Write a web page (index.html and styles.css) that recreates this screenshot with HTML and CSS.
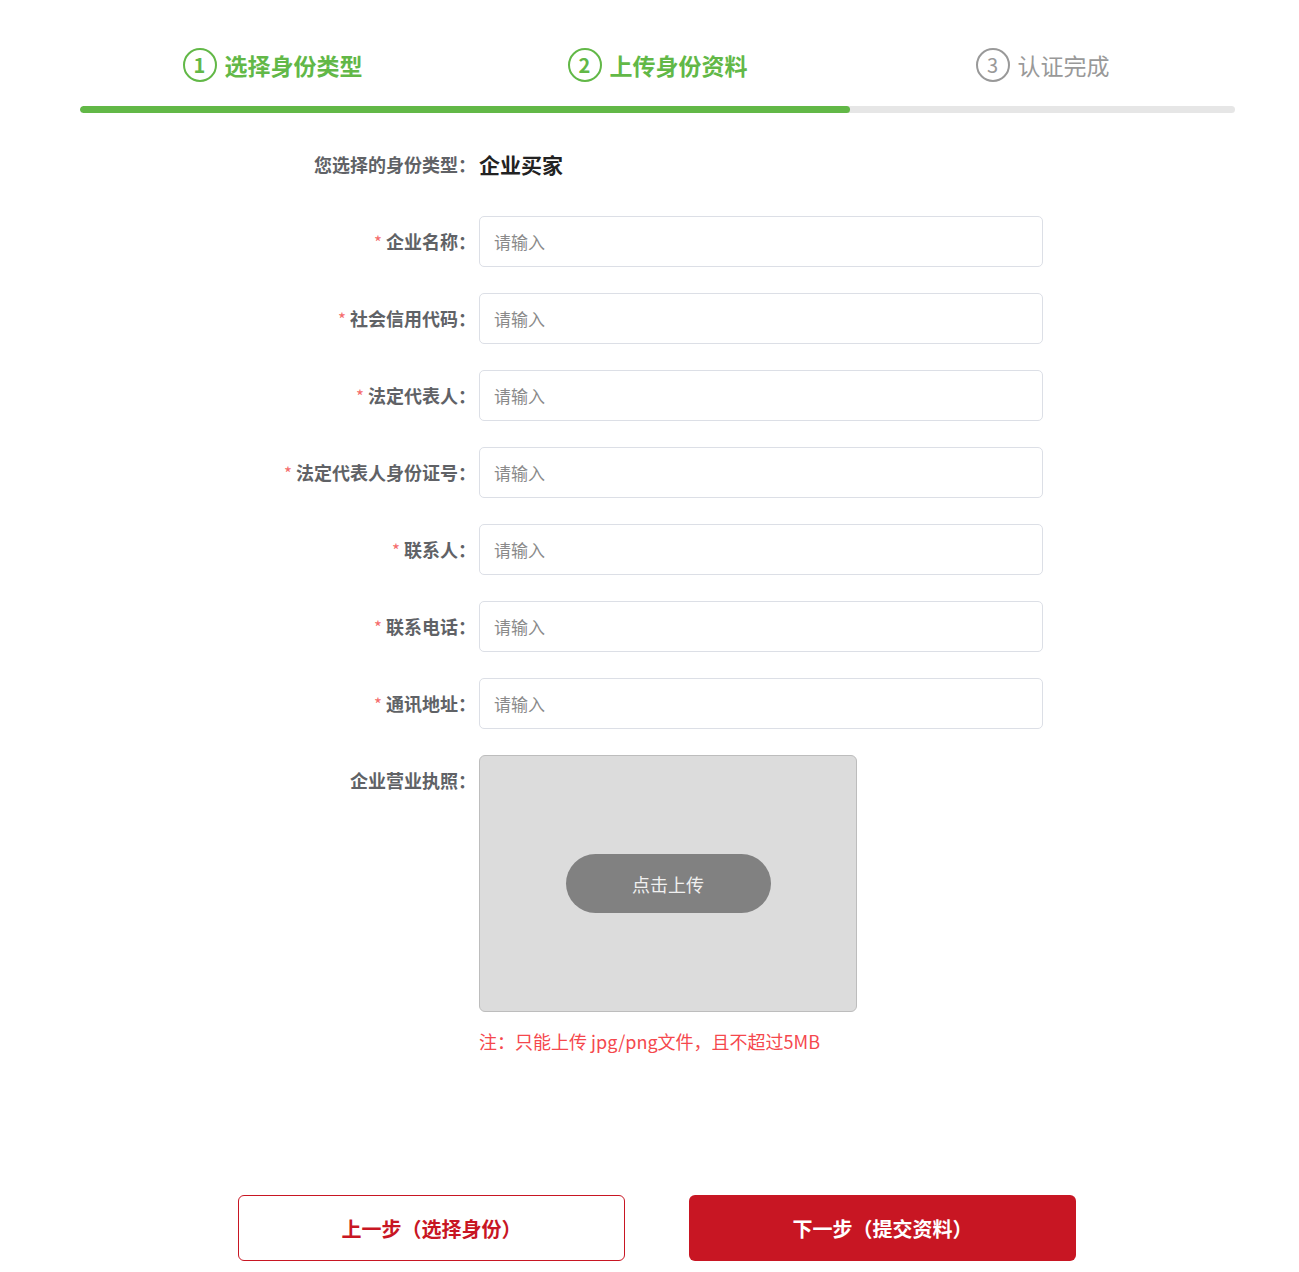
FILE: index.html
```html
<!DOCTYPE html>
<html lang="zh-CN">
<head>
<meta charset="utf-8">
<title>上传身份资料</title>
<link rel="stylesheet" href="styles.css">
</head>
<body>
<div class="page">
  <div class="steps">
    <div class="step done"><span class="num">1</span><span class="step-title">选择身份类型</span></div>
    <div class="step done"><span class="num">2</span><span class="step-title">上传身份资料</span></div>
    <div class="step todo"><span class="num">3</span><span class="step-title">认证完成</span></div>
  </div>
  <div class="progress"><div class="progress-fill"></div></div>

  <div class="form">
    <div class="label">您选择的身份类型：</div>
    <div class="value">企业买家</div>

    <div class="label"><span class="req">*</span> 企业名称：</div>
    <div class="input">请输入</div>

    <div class="label"><span class="req">*</span> 社会信用代码：</div>
    <div class="input">请输入</div>

    <div class="label"><span class="req">*</span> 法定代表人：</div>
    <div class="input">请输入</div>

    <div class="label"><span class="req">*</span> 法定代表人身份证号：</div>
    <div class="input">请输入</div>

    <div class="label"><span class="req">*</span> 联系人：</div>
    <div class="input">请输入</div>

    <div class="label"><span class="req">*</span> 联系电话：</div>
    <div class="input">请输入</div>

    <div class="label"><span class="req">*</span> 通讯地址：</div>
    <div class="input">请输入</div>

    <div class="label">企业营业执照：</div>
    <div class="upload-col">
      <div class="upload-box"><div class="upload-btn">点击上传</div></div>
      <div class="note">注：只能上传 jpg/png文件，且不超过5MB</div>
    </div>
  </div>

  <div class="actions">
    <div class="btn btn-prev">上一步（选择身份）</div>
    <div class="btn btn-next">下一步（提交资料）</div>
  </div>
</div>
</body>
</html>
```

FILE: styles.css
```css
html, body {
  margin: 0;
  padding: 0;
  background: #fff;
}
body {
  font-family: "Microsoft YaHei", "Noto Sans CJK SC", "Noto Sans", sans-serif;
  color: #333;
}
.page {
  margin-left: 80px;
  width: 1155px;
  padding-top: 48px;
}
.steps {
  display: grid;
  grid-template-columns: repeat(3, 1fr);
  height: 34px;
}
.step {
  display: flex;
  align-items: center;
  justify-content: center;
  gap: 8px;
}
.num {
  box-sizing: border-box;
  width: 34px;
  height: 34px;
  border-radius: 50%;
  border: 2px solid currentColor;
  display: flex;
  align-items: center;
  justify-content: center;
  font-size: 20px;
  line-height: 1;
  font-weight: 700;
}
.step-title {
  font-size: 23px;
  line-height: 34px;
}
.step.done { color: #62b847; }
.step.done .step-title { font-weight: 700; }
.step.todo { color: #999; }
.step.todo .num { font-weight: 400; }
.progress {
  margin-top: 24px;
  height: 7px;
  border-radius: 4px;
  background: #e6e6e6;
  overflow: hidden;
}
.progress-fill {
  width: 770px;
  height: 100%;
  border-radius: 4px;
  background: #62b847;
}
.form {
  margin-top: 26px;
  margin-left: 185px;
  display: grid;
  grid-template-columns: 200px 564px;
  column-gap: 14px;
  row-gap: 26px;
}
.label {
  text-align: right;
  font-size: 18px;
  font-weight: 700;
  color: #606266;
  line-height: 51px;
  white-space: nowrap;
  margin-right: -11px;
}
.req {
  color: #f56c6c;
  font-weight: 400;
  font-size: 17px;
}
.value {
  font-size: 21px;
  font-weight: 700;
  color: #222;
  line-height: 51px;
}
.input {
  box-sizing: border-box;
  height: 51px;
  border: 1px solid #dcdfe6;
  border-radius: 5px;
  padding-left: 14px;
  font-size: 17px;
  line-height: 49px;
  color: #8a8a8a;
}
.upload-col {
  display: flex;
  flex-direction: column;
}
.upload-box {
  box-sizing: border-box;
  width: 378px;
  height: 257px;
  background: #dcdcdc;
  border: 1px solid #bdbdbd;
  border-radius: 6px;
  display: flex;
  align-items: center;
  justify-content: center;
}
.upload-btn {
  width: 205px;
  height: 59px;
  border-radius: 30px;
  background: #818181;
  color: #f0f0f0;
  font-size: 18px;
  display: flex;
  align-items: center;
  justify-content: center;
}
.note {
  margin-top: 17px;
  font-size: 18px;
  line-height: 24px;
  color: #f5484d;
}
.actions {
  margin-top: 142px;
  display: flex;
  justify-content: center;
  gap: 64px;
  margin-left: -1px;
}
.btn {
  box-sizing: border-box;
  width: 387px;
  height: 66px;
  border-radius: 6px;
  display: flex;
  align-items: center;
  justify-content: center;
  font-size: 20px;
  font-weight: 700;
}
.btn-prev {
  border: 1px solid #c81623;
  color: #c81623;
  background: #fff;
}
.btn-next {
  background: #c81623;
  color: #fff;
}
```
